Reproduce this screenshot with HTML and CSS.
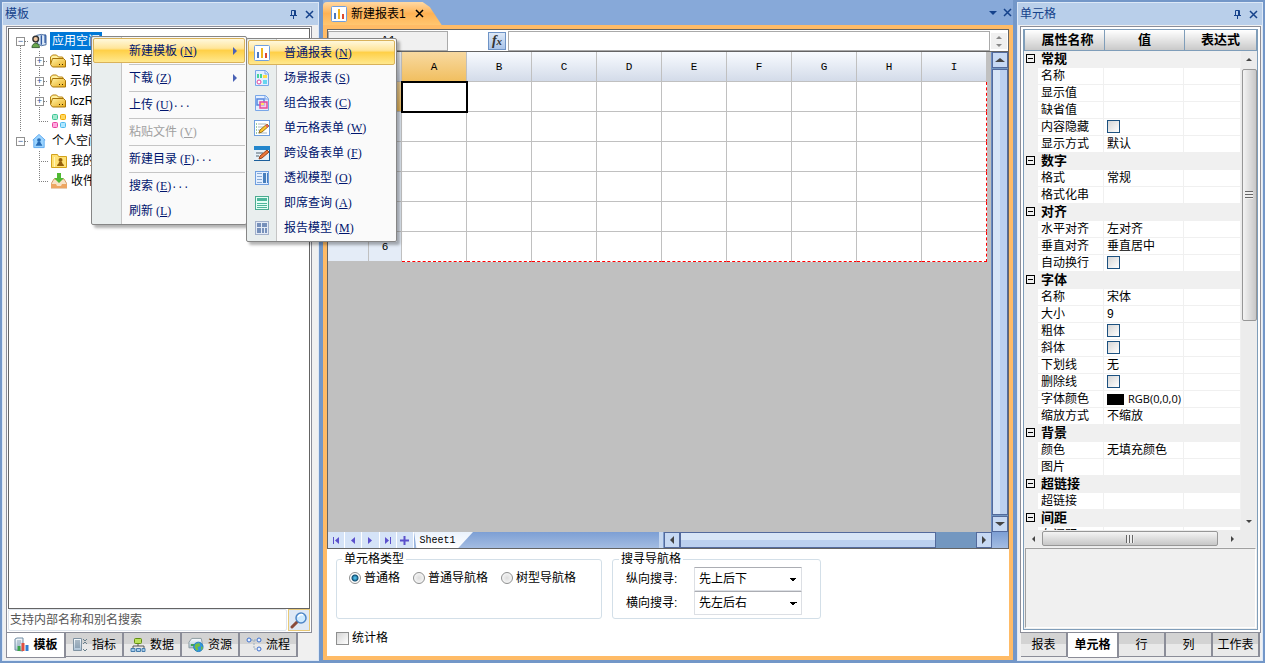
FILE: index.html
```html
<!DOCTYPE html>
<html lang="zh-CN">

<head>
    <meta charset="UTF-8">
    <meta name="viewport" content="width=device-width, initial-scale=1.0">
    <title>新建报表1</title>
    <link rel="stylesheet" href="styles.css">
</head>

<body>

    <!-- Shared icons -->
    <svg class="defs" width="0" height="0">
        <defs>
            <linearGradient id="gold" x1="0" y1="0" x2="1" y2="1">
                <stop offset="0" stop-color="#fff3a8" />
                <stop offset="1" stop-color="#e9ad1d" />
            </linearGradient>
            <linearGradient id="cabinet" x1="0" y1="0" x2="0" y2="1">
                <stop offset="0" stop-color="#fafdff" />
                <stop offset="1" stop-color="#a9c0d4" />
            </linearGradient>
        </defs>
        <symbol id="i-folder" viewBox="0 0 16 16">
            <path d="M.5 11V4l2-2h4l2 2h4l1 2v1" fill="#fff0a0" stroke="#b8810b" />
            <path d="M2.500 5.500h11l2 2V14h-13l-2-2.500z" fill="url(#gold)" stroke="#a87408" />
            <path d="M9 11.500h1M12 11.500h1" stroke="#3b2a00" />
        </symbol>
        <symbol id="i-chart" viewBox="0 0 16 16">
            <rect x=".5" y=".5" width="15" height="15" rx="1" fill="#fff" stroke="#6f9fe0" />
            <path d="M4 7v6" stroke="#4c78bd" stroke-width="2" />
            <path d="M8 3v10" stroke="#f0b41c" stroke-width="2" />
            <path d="M12 8v5" stroke="#dd4b2f" stroke-width="2" />
        </symbol>
        <symbol id="i-pin" viewBox="0 0 9 9">
            <path d="M2.500 5V.5h4V5M5.500 1v4M1 5.500h7M4.500 6v3" fill="none" stroke="#15428b" />
        </symbol>
        <symbol id="i-close" viewBox="0 0 9 9">
            <path d="M1 1l7 7M8 1L1 8" stroke="currentColor" stroke-width="1.500" />
        </symbol>
    </svg>

    <aside class="panel panel-left">
        <div class="panel-title">
            <h2>模板</h2>
            <button aria-label="固定"><svg width="9" height="9"><use href="#i-pin" /></svg></button>
            <button aria-label="关闭"><svg width="9" height="9"><use href="#i-close" /></svg></button>
        </div>
        <div class="panel-body">
            <div class="tree-box">
                <ul class="tree">
                    <li>
                        <div class="node"><button class="toggle" aria-label="折叠">−</button>
                            <svg width="16" height="16" viewBox="0 0 17 16">
                                <path d="M6 2l5-1 5 1v10l-5 1-4-2z" fill="#dceaf8" stroke="#42689c" />
                                <path d="M11 2v10M15 1v9" stroke="#315ba4" stroke-width="1.500" />
                                <circle cx="5" cy="6" r="3" fill="#f1c7a0" stroke="#333" stroke-width="1.500" />
                                <path d="M1 15c0-6 8-6 8 0z" fill="#6aa84e" stroke="#395f34" />
                            </svg>
                            <span class="selected">应用空间</span></div>
                        <ul>
                            <li class="node"><button class="toggle" aria-label="展开">+</button><svg width="16" height="16"><use href="#i-folder" /></svg><span>订单</span></li>
                            <li class="node"><button class="toggle" aria-label="展开">+</button><svg width="16" height="16"><use href="#i-folder" /></svg><span>示例</span></li>
                            <li class="node"><button class="toggle" aria-label="展开">+</button><svg width="16" height="16"><use href="#i-folder" /></svg><span>lczR</span></li>
                            <li class="node leaf">
                                <svg width="16" height="16" viewBox="0 0 16 16">
                                    <rect x="1.500" y="1.500" width="5" height="5" rx="1" fill="#a5e8cf" stroke="#3fc796" />
                                    <rect x="9.500" y="1.500" width="5" height="5" rx="1" fill="#ffd75d" stroke="#f0a800" />
                                    <rect x="1.500" y="9.500" width="5" height="5" rx="1" fill="#ffa7df" stroke="#e8439f" />
                                    <rect x="9.500" y="9.500" width="5" height="5" rx="1" fill="#b0e7ff" stroke="#4eb9ed" />
                                </svg><span>新建</span></li>
                        </ul>
                    </li>
                    <li>
                        <div class="node"><button class="toggle" aria-label="折叠">−</button>
                            <svg width="16" height="16" viewBox="0 0 17 16">
                                <path d="M8.500 1L15 7h-1v8H3V7H2z" fill="#9bd4ff" stroke="#5faaf0" />
                                <circle cx="8.500" cy="7" r="2" fill="#276bb5" />
                                <path d="M5 13c0-2 2-2 2-4h3c0 2 2 2 2 4z" fill="#276bb5" />
                            </svg>
                            <span>个人空间</span></div>
                        <ul>
                            <li class="node leaf">
                                <svg width="16" height="16" viewBox="0 0 16 16">
                                    <path d="M.5 14.500v-13h6l1 2h8v11z" fill="#ffe174" stroke="#d3a21c" />
                                    <path d="M3.500 4v10" stroke="#fff5b8" />
                                    <circle cx="9.500" cy="7" r="2" fill="#95600b" />
                                    <path d="M6 13c0-2 2-2 2-4h3c0 2 2 2 2 4z" fill="#95600b" />
                                </svg><span>我的</span></li>
                            <li class="node leaf">
                                <svg width="16" height="16" viewBox="0 0 16 16">
                                    <path d="M3 6h10l3 5v4H0v-4z" fill="#f8e2c5" stroke="#d5a06a" />
                                    <path d="M0 11h5l1 2h4l1-2h5v4H0z" fill="#eda662" />
                                    <path d="M6 0h4v5h3l-5 5-5-5h3z" fill="#50b933" />
                                </svg><span>收件箱</span></li>
                        </ul>
                    </li>
                </ul>
            </div>
            <div class="search">
                <input type="text" aria-label="搜索" placeholder="支持内部名称和别名搜索">
                <button aria-label="搜索">
                    <svg width="18" height="18" viewBox="0 0 18 18">
                        <path d="M8 10l-6 6" stroke="#8a4b3a" stroke-width="3" stroke-linecap="round" />
                        <circle cx="11" cy="7" r="5" fill="#cdeaff" stroke="#4d86c6" stroke-width="1.500" />
                        <path d="M8 6c1-2 3-3 5-2" fill="none" stroke="#fff" stroke-width="1.500" />
                    </svg>
                </button>
            </div>
        </div>
        <nav class="tabs tabs-left">
            <button class="active">
                <svg width="16" height="16" viewBox="0 0 16 16"><path d="M2 13V2l2-1h6v13z" fill="url(#cabinet)" stroke="#718da4" /><path d="M4 4h4M4 6h4M4 8h3" stroke="#8aa4b6" /><path d="M6 9v5" stroke="#39a249" stroke-width="3" /><path d="M10 6v8" stroke="#e14f40" stroke-width="3" /><path d="M14 8v6" stroke="#337fd1" stroke-width="3" /></svg>模板</button>
            <button>
                <svg width="16" height="16" viewBox="0 0 16 16"><path d="M1.500 13.500v-12h8v12z" fill="url(#cabinet)" stroke="#8093a2" /><path d="M3 4h5M3 6h5M3 8h5M3 10h5" stroke="#657d90" /><path d="M11 2l2 2 2-2M11 7l2-2 2 2M11 12l2 2 2-2" fill="none" stroke="#687f8c" /></svg>指标</button>
            <button>
                <svg width="16" height="16" viewBox="0 0 16 16"><path d="M8 7v2M3 11V9h11v2" fill="none" stroke="#555" /><rect x="4.500" y="1.500" width="7" height="5" rx="1" fill="#b9e15c" stroke="#638d12" /><path d="M1 11.500h4v3H1zM6.500 11.500h4v3h-4zM12 11.500h3v3h-3z" fill="#a3cbec" stroke="#477dac" /></svg>数据</button>
            <button>
                <svg width="16" height="16" viewBox="0 0 17 16"><path d="M1 5l3-4h10l1 4v6H1z" fill="url(#cabinet)" stroke="#8a999e" /><path d="M3 8h4" stroke="#37a44a" stroke-width="2" /><circle cx="11" cy="10" r="5" fill="#3197df" stroke="#247ebd" /><path d="M8 7l4-1 1 3-3 1 1 3-2 1-2-4zM14 9l2 2-2 3z" fill="#75bf41" /></svg>资源</button>
            <button>
                <svg width="16" height="16" viewBox="0 0 16 16"><path d="M5 3h6M8 3v9h3" fill="none" stroke="#9dafbf" stroke-dasharray="2 1" /><circle cx="3" cy="3" r="2" fill="#eaf2ff" stroke="#3e70cc" /><circle cx="13" cy="3" r="2" fill="#eaf2ff" stroke="#3e70cc" /><circle cx="13" cy="12" r="2" fill="#eaf2ff" stroke="#3e70cc" /></svg>流程</button>
        </nav>
    </aside>

    <main class="editor">
        <div class="doc-tabs">
            <div class="doc-tab">
                <svg width="16" height="16"><use href="#i-chart" /></svg>
                <span>新建报表1</span>
                <button aria-label="关闭"><svg width="9" height="9"><use href="#i-close" /></svg></button>
            </div>
            <button class="doc-list" aria-label="文档列表"><svg width="8" height="4" viewBox="0 0 8 4"><path d="M0 0h8L4 4z" fill="#15428b" /></svg></button>
            <button aria-label="关闭"><svg width="9" height="9"><use href="#i-close" /></svg></button>
        </div>
        <div class="doc">
            <div class="sheet">
                <div class="formula-bar">
                    <input class="cell-name" aria-label="单元格" value="A1" readonly>
                    <button class="fx" aria-label="函数"><i>f<small>x</small></i></button>
                    <input class="formula" type="text" aria-label="公式">
                    <div class="spinner"><span class="up"></span><span class="down"></span></div>
                </div>
                <div class="grid-area">
                    <div class="viewport">
                        <table class="grid">
                            <thead>
                                <tr><th class="corner"></th><th class="num"></th><th class="current">A</th><th>B</th><th>C</th><th>D</th><th>E</th><th>F</th><th>G</th><th>H</th><th>I</th></tr>
                            </thead>
                            <tbody>
                                <tr><th></th><th class="current">1</th><td class="cursor"></td><td></td><td></td><td></td><td></td><td></td><td></td><td></td><td></td></tr>
                                <tr><th></th><th>2</th><td></td><td></td><td></td><td></td><td></td><td></td><td></td><td></td><td></td></tr>
                                <tr><th></th><th>3</th><td></td><td></td><td></td><td></td><td></td><td></td><td></td><td></td><td></td></tr>
                                <tr><th></th><th>4</th><td></td><td></td><td></td><td></td><td></td><td></td><td></td><td></td><td></td></tr>
                                <tr><th></th><th>5</th><td></td><td></td><td></td><td></td><td></td><td></td><td></td><td></td><td></td></tr>
                                <tr><th></th><th>6</th><td></td><td></td><td></td><td></td><td></td><td></td><td></td><td></td><td></td></tr>
                            </tbody>
                        </table>
                    </div>
                    <div class="vscroll">
                        <button aria-label="向上"><span class="up"></span></button>
                        <div class="thumb"></div>
                        <button aria-label="向下"><span class="down"></span></button>
                    </div>
                </div>
                <div class="sheet-bar">
                    <div class="sheet-nav">
                        <button aria-label="首页"><svg width="9" height="9" viewBox="0 0 9 9"><path d="M1 1h1v7H1zM7 1v7L3 4.500z" /></svg></button>
                        <button aria-label="上一页"><svg width="9" height="9" viewBox="0 0 9 9"><path d="M6 1v7L2 4.500z" /></svg></button>
                        <button aria-label="下一页"><svg width="9" height="9" viewBox="0 0 9 9"><path d="M2 1v7l4-3.500z" /></svg></button>
                        <button aria-label="末页"><svg width="9" height="9" viewBox="0 0 9 9"><path d="M7 1h1v7H7zM2 1v7l4-3.500z" /></svg></button>
                        <button aria-label="新增"><svg width="9" height="9" viewBox="0 0 9 9"><path d="M3.500 0h2v3.500H9v2H5.500V9h-2V5.500H0v-2h3.500z" /></svg></button>
                    </div>
                    <button class="sheet-tab">Sheet1</button>
                    <div class="hscroll">
                        <button aria-label="向左"><span class="left"></span></button>
                        <div class="thumb"></div>
                        <div class="track"></div>
                        <button aria-label="向右"><span class="right"></span></button>
                    </div>
                </div>
            </div>
            <form class="options">
                <div class="groups">
                    <fieldset class="cell-type">
                        <legend>单元格类型</legend>
                        <label><input type="radio" name="type" checked>普通格</label>
                        <label><input type="radio" name="type">普通导航格</label>
                        <label><input type="radio" name="type">树型导航格</label>
                    </fieldset>
                    <fieldset class="nav-type">
                        <legend>搜寻导航格</legend>
                        <label for="v-search">纵向搜寻:</label>
                        <select id="v-search"><option>先上后下</option><option>先下后上</option></select>
                        <label for="h-search">横向搜寻:</label>
                        <select id="h-search"><option>先左后右</option><option>先右后左</option></select>
                    </fieldset>
                </div>
                <label class="stat"><input type="checkbox">统计格</label>
            </form>
        </div>
    </main>

    <aside class="panel panel-right">
        <div class="panel-title">
            <h2>单元格</h2>
            <button aria-label="固定"><svg width="9" height="9"><use href="#i-pin" /></svg></button>
            <button aria-label="关闭"><svg width="9" height="9"><use href="#i-close" /></svg></button>
        </div>
        <div class="panel-body">
            <div class="props-box">
                <table class="props-head">
                    <thead>
                        <tr><th class="name">属性名称</th><th class="value">值</th><th>表达式</th></tr>
                    </thead>
                </table>
                <div class="props-view">
                    <div class="props-scroll">
                        <table class="props">
                            <colgroup><col class="c-toggle"><col class="c-name"><col class="c-value"><col></colgroup>
                            <tbody>
                                <tr class="group"><th><button aria-label="折叠"></button></th><th colspan="3">常规</th></tr>
                                <tr><th></th><td>名称</td><td></td><td></td></tr>
                                <tr><th></th><td>显示值</td><td></td><td></td></tr>
                                <tr><th></th><td>缺省值</td><td></td><td></td></tr>
                                <tr><th></th><td><label for="p-hide">内容隐藏</label></td><td><input type="checkbox" id="p-hide"></td><td></td></tr>
                                <tr><th></th><td>显示方式</td><td>默认</td><td></td></tr>
                                <tr class="group"><th><button aria-label="折叠"></button></th><th colspan="3">数字</th></tr>
                                <tr><th></th><td>格式</td><td>常规</td><td></td></tr>
                                <tr><th></th><td>格式化串</td><td></td><td></td></tr>
                                <tr class="group"><th><button aria-label="折叠"></button></th><th colspan="3">对齐</th></tr>
                                <tr><th></th><td>水平对齐</td><td>左对齐</td><td></td></tr>
                                <tr><th></th><td>垂直对齐</td><td>垂直居中</td><td></td></tr>
                                <tr><th></th><td><label for="p-wrap">自动换行</label></td><td><input type="checkbox" id="p-wrap"></td><td></td></tr>
                                <tr class="group"><th><button aria-label="折叠"></button></th><th colspan="3">字体</th></tr>
                                <tr><th></th><td>名称</td><td>宋体</td><td></td></tr>
                                <tr><th></th><td>大小</td><td>9</td><td></td></tr>
                                <tr><th></th><td><label for="p-bold">粗体</label></td><td><input type="checkbox" id="p-bold"></td><td></td></tr>
                                <tr><th></th><td><label for="p-italic">斜体</label></td><td><input type="checkbox" id="p-italic"></td><td></td></tr>
                                <tr><th></th><td>下划线</td><td>无</td><td></td></tr>
                                <tr><th></th><td><label for="p-strike">删除线</label></td><td><input type="checkbox" id="p-strike"></td><td></td></tr>
                                <tr><th></th><td>字体颜色</td><td class="rgb"><span class="swatch"></span>RGB(0,0,0)</td><td></td></tr>
                                <tr><th></th><td>缩放方式</td><td>不缩放</td><td></td></tr>
                                <tr class="group"><th><button aria-label="折叠"></button></th><th colspan="3">背景</th></tr>
                                <tr><th></th><td>颜色</td><td>无填充颜色</td><td></td></tr>
                                <tr><th></th><td>图片</td><td></td><td></td></tr>
                                <tr class="group"><th><button aria-label="折叠"></button></th><th colspan="3">超链接</th></tr>
                                <tr><th></th><td>超链接</td><td></td><td></td></tr>
                                <tr class="group"><th><button aria-label="折叠"></button></th><th colspan="3">间距</th></tr>
                                <tr><th></th><td>左间距</td><td>1</td><td></td></tr>
                            </tbody>
                        </table>
                    </div>
                    <div class="bar bar-v">
                        <button aria-label="向上"><span class="up"></span></button>
                        <div class="thumb"></div>
                        <div class="track"></div>
                        <button aria-label="向下"><span class="down"></span></button>
                    </div>
                </div>
                <div class="bar bar-h">
                    <button aria-label="向左"><span class="left"></span></button>
                    <div class="thumb"></div>
                    <button aria-label="向右"><span class="right"></span></button>
                </div>
                <div class="description"></div>
            </div>
        </div>
        <nav class="tabs tabs-right">
            <button>报表</button>
            <button class="active">单元格</button>
            <button>行</button>
            <button>列</button>
            <button>工作表</button>
        </nav>
    </aside>

    <!-- Context menu of the tree -->
    <ul class="menu context-menu">
        <li class="hot">
            <button>新建模板<span class="key">(<u>N</u>)</span><span class="arrow"></span></button>
            <ul class="menu submenu">
                <li class="hot"><button><svg width="16" height="16"><use href="#i-chart" /></svg>普通报表<span class="key">(<u>N</u>)</span></button></li>
                <li><button>
                    <svg width="16" height="16" viewBox="0 0 16 16"><path d="M1.500.5h10l3 3v12h-13z" fill="#e3efff" stroke="#78a7e8" /><path d="M11 1v3h3" fill="none" stroke="#78a7e8" /><path d="M3 4h2v4H3zM6 4h2v4H6z" fill="#45d49a" /><path d="M9 5h4v3H9z" fill="#ffdd45" /><path d="M9 10h4v4H9z" fill="#66d6ef" /><circle cx="5" cy="12" r="2" fill="#fff" stroke="#e34499" /></svg>场景报表<span class="key">(<u>S</u>)</span></button></li>
                <li><button>
                    <svg width="16" height="16" viewBox="0 0 16 16"><path d="M1.500.5h10l3 3v12h-13z" fill="#e3efff" stroke="#78a7e8" /><path d="M11 1v3h3" fill="none" stroke="#78a7e8" /><rect x="3" y="4" width="7" height="6" fill="none" stroke="#5487df" stroke-width="1.500" /><rect x="6" y="7" width="7" height="6" fill="#ffb7dc" fill-opacity=".6" stroke="#e84b99" stroke-width="1.500" /><path d="M7 8h3v2H7z" fill="#ffe165" /></svg>组合报表<span class="key">(<u>C</u>)</span></button></li>
                <li><button>
                    <svg width="16" height="16" viewBox="0 0 16 16"><rect x=".5" y=".5" width="15" height="15" fill="#fff" stroke="#6f9fe0" /><path d="M2 4h1M2 7h1M2 10h1M2 13h1" stroke="#3c9f45" /><path d="M4 4h8M4 7h7M4 10h4M4 13h9" stroke="#a9b8bd" /><path d="M5 13l1-3 7-6 2 2-7 6z" fill="#ffc52b" stroke="#9c741c" /><path d="M12 5l2 2" stroke="#e15b6c" stroke-width="2" /></svg>单元格表单<span class="key">(<u>W</u>)</span></button></li>
                <li><button>
                    <svg width="16" height="16" viewBox="0 0 16 16"><path d="M0 1h16v14H0z" fill="#e7f0f7" /><path d="M0 1h16v4H0z" fill="#2286cc" /><path d="M0 15.500h16M15.500 5v10" stroke="#1b5f9b" /><path d="M2 8h7M2 11h3" stroke="#9ba9b3" stroke-width="2" /><path d="M5 14l1-3 7-6 2 2-7 6z" fill="#ef7736" stroke="#934320" /></svg>跨设备表单<span class="key">(<u>F</u>)</span></button></li>
                <li><button>
                    <svg width="16" height="16" viewBox="0 0 16 16"><rect x="1.500" y="1.500" width="13" height="13" fill="#e3efff" stroke="#6f9fe0" /><path d="M3 3.500h5M3 6.500h5M3 9.500h5M3 12.500h5" stroke="#86a9d4" /><path d="M9 3h3v10H9zM13 3h1v10h-1z" fill="#477fbd" /></svg>透视模型<span class="key">(<u>O</u>)</span></button></li>
                <li><button>
                    <svg width="16" height="16" viewBox="0 0 16 16"><rect x="1.500" y="1.500" width="13" height="13" fill="#e4fff5" stroke="#4cab91" /><path d="M3 3h10v3H3z" fill="#4cb79b" /><path d="M3 8.500h10M3 10.500h10M3 12.500h10" stroke="#4cb79b" /></svg>即席查询<span class="key">(<u>A</u>)</span></button></li>
                <li><button>
                    <svg width="16" height="16" viewBox="0 0 16 16"><rect x="1.500" y="1.500" width="13" height="13" fill="#e3eaf5" stroke="#a2b0ca" /><path d="M3 3h4v4H3zM3 8h4v5H3zM8 3h5v4H8zM8 8h2v5H8zM11 8h2v5h-2z" fill="#7690ba" /></svg>报告模型<span class="key">(<u>M</u>)</span></button></li>
            </ul>
        </li>
        <li class="sep"></li>
        <li><button>下载<span class="key">(<u>Z</u>)</span><span class="arrow"></span></button></li>
        <li class="sep"></li>
        <li><button>上传<span class="key">(<u>U</u>)</span><span class="dots">...</span></button></li>
        <li class="sep"></li>
        <li><button disabled>粘贴文件<span class="key">(<u>V</u>)</span></button></li>
        <li class="sep"></li>
        <li><button>新建目录<span class="key">(<u>F</u>)</span><span class="dots">...</span></button></li>
        <li class="sep"></li>
        <li><button>搜索<span class="key">(<u>E</u>)</span><span class="dots">...</span></button></li>
        <li><button>刷新<span class="key">(<u>L</u>)</span></button></li>
    </ul>

</body>

</html>
```
FILE: styles.css
```css
* {
    box-sizing: border-box;
}

body {
    display: flex;
    gap: 4px;
    height: 100vh;
    margin: 0;
    padding: 0 2px;
    overflow: hidden;
    position: relative;
    background-color: #7397c8;
    color: #000;
    font-family: "Liberation Sans", "Noto Sans CJK SC", sans-serif;
    font-size: 12px;
    line-height: 16px;
}

button, input, select {
    font: inherit;
    color: inherit;
    margin: 0;
    padding: 0;
    border: 0;
    background: none;
}

ul {
    list-style: none;
    margin: 0;
    padding: 0;
}

table {
    border-collapse: collapse;
    table-layout: fixed;
}

.defs {
    position: absolute;
}

/* arrows */
.up, .down, .left, .right, .arrow {
    width: 0;
    height: 0;
    border: 4px solid transparent;
}

.up {
    border-top: 0;
    border-bottom-color: #444;
}

.down {
    border-bottom: 0;
    border-top-color: #444;
}

.left {
    border-left: 0;
    border-right-color: #444;
}

.right {
    border-right: 0;
    border-left-color: #444;
}

/* side panels */
.panel {
    display: flex;
    flex-direction: column;
    flex-shrink: 0;
    margin: 2px 0;
    border: 1px solid #dce8f7;
    background-color: #f0f0f0;
}

.panel-left {
    width: 317px;
}

.panel-right {
    width: 246px;
}

.panel-title {
    display: flex;
    align-items: center;
    gap: 7px;
    height: 22px;
    padding: 0 4px 0 2px;
    background-color: #b9cfea;
    color: #15428b;
}

.panel-title h2 {
    flex: 1;
    margin: 0;
    font-size: 12px;
    font-weight: normal;
}

.panel-title button, .doc-tabs button {
    display: flex;
    color: #15428b;
}

.panel-body {
    flex: 1;
    display: flex;
    flex-direction: column;
    min-height: 0;
    margin: 1px 6px 0 3px;
    padding: 1px;
    border: 1px solid #8b8d98;
    background-color: #fff;
}

.panel-right .panel-body {
    margin: 1px 1px 0 2px;
}

.tree-box {
    flex: 1;
    border: 1px solid #646464;
    padding: 2px 7px;
}

.node {
    display: flex;
    align-items: center;
    gap: 3px;
    height: 20px;
    white-space: nowrap;
}

.node .toggle {
    display: flex;
    align-items: center;
    justify-content: center;
    width: 9px;
    height: 9px;
    margin-right: 3px;
    border: 1px solid #919191;
    background-color: #fff;
    color: #2f4f8f;
    font-size: 9px;
    line-height: 7px;
}

.tree > li {
    background: repeating-linear-gradient(#808080 0 1px, transparent 1px 2px) 4px 15px / 1px 100% no-repeat;
}

.tree > li:last-child {
    background: none;
}

.tree .node::before {
    content: "";
    order: 1;
    width: 4px;
    margin-left: -7px;
    border-top: 1px dotted #808080;
}

.tree .node svg {
    order: 2;
}

.tree .node span {
    order: 3;
    padding: 1px 2px;
}

.tree ul {
    margin-left: 19px;
    background: repeating-linear-gradient(#808080 0 1px, transparent 1px 2px) 4px 0 / 1px calc(100% - 10px) no-repeat;
}

.tree ul .node span {
    padding: 1px;
}

.node.leaf {
    padding-left: 12px;
}

.tree .node.leaf::before {
    width: 9px;
    margin-left: -8px;
}

.tree .node .selected {
    background-color: #0078d7;
    color: #fff;
}

.search {
    display: flex;
    gap: 1px;
    height: 22px;
}

.search input {
    flex: 1;
    min-width: 0;
    padding: 0 1px;
    border: 1px solid #dfe5ec;
    border-radius: 2px;
}

.search input::placeholder {
    color: #555;
    opacity: 1;
}

.search button {
    width: 22px;
    border: 1px solid #e8c977;
    background-color: #dfe9f5;
}

.search svg {
    display: block;
    margin: auto;
}

/* bottom tabs of the side panels */
.tabs {
    display: flex;
    align-items: flex-start;
    height: 27px;
    margin: 0 2px 0 3px;
}

.tabs button {
    display: flex;
    align-items: center;
    justify-content: center;
    gap: 4px;
    height: 24px;
    border: 2px solid #8b8d98;
    border-width: 0 2px 1px 0;
    background: linear-gradient(#d3d3d3 50%, #e9e9e9 50%);
    white-space: nowrap;
}

.tabs .active {
    height: 25px;
    background: #fff;
    font-weight: bold;
}

.tabs-left button {
    width: 58px;
}

.tabs-left .active {
    width: 60px;
    border-left-width: 1px;
}

.tabs-right button {
    flex: 1 1 48px;
}

.tabs-right .active {
    flex-basis: 52px;
}

/* editor */
.editor {
    flex: 1;
    display: flex;
    flex-direction: column;
    min-width: 0;
    padding-bottom: 3px;
}

.doc-tabs {
    display: flex;
    align-items: center;
    gap: 6px;
    height: 25px;
    padding-right: 1px;
    background-color: #87a9d9;
}

.doc-tab {
    display: flex;
    align-items: center;
    gap: 4px;
    height: 23px;
    margin-top: 2px;
    padding: 0 18px 0 8px;
    border-radius: 4px 0 0 0;
    background: linear-gradient(#ffd9a4, #ffb254 50%, #ffc670);
    clip-path: polygon(0 0, 84% 0, 90% 22%, 100% 100%, 0 100%);
}

.doc-tab button {
    margin-left: 5px;
    color: #000;
}

.doc-list {
    margin-left: auto;
}

.doc {
    flex: 1;
    display: flex;
    flex-direction: column;
    min-height: 0;
    padding: 4px;
    background-color: #ffbb66;
}

.sheet {
    flex: 1;
    display: flex;
    flex-direction: column;
    min-height: 0;
    border: 1px solid #646464;
    background-color: #fff;
}

.formula-bar {
    display: flex;
    height: 22px;
    padding-top: 1px;
    border-bottom: 1px solid #646464;
}

.cell-name {
    width: 120px;
    border: 1px solid #aaa;
    background-color: #f0f0f0;
    text-align: center;
}

.fx {
    width: 18px;
    height: 18px;
    margin: 1px 2px 0 40px;
    border: 1px solid #6e93c6;
    background: linear-gradient(#dce8f7, #a9c3e8);
    color: #333;
    font: bold 14px/14px "Liberation Serif", serif;
}

.fx small {
    font-size: 11px;
}

.formula {
    flex: 1;
    min-width: 0;
    border: 1px solid #aaa;
}

.spinner {
    display: flex;
    flex-direction: column;
    align-items: center;
    justify-content: space-around;
    width: 16px;
    margin: 2px 1px;
    background-color: #f0f0f0;
}

.spinner span {
    border-width: 3px;
}

.spinner .up {
    border-top: 0;
    border-bottom-color: #888;
}

.spinner .down {
    border-bottom: 0;
    border-top-color: #888;
}

.grid-area {
    flex: 1;
    display: flex;
    min-height: 0;
}

.viewport {
    flex: 1;
    min-width: 0;
    overflow: hidden;
    background-color: #c0c0c0;
}

.grid {
    width: 659px;
    border-collapse: separate;
    border-spacing: 0;
}

.grid th, .grid td {
    height: 30px;
    padding: 0;
    border: 1px solid #c0c0c0;
    border-width: 0 1px 1px 0;
    background-color: #fff;
}

.grid th {
    background-color: #e4ecf7;
    font: 11px "Liberation Mono", monospace;
}

.grid thead th {
    background: linear-gradient(#f8fbff, #d3dbe9);
}

.grid thead .corner {
    width: 41px;
}

.grid thead .num {
    width: 33px;
}

.grid .current, .grid thead .current {
    background: linear-gradient(#f8d9a0, #f1bf60);
}

.grid td:last-child {
    border-right: 1px dashed #f00;
}

.grid tr:last-child td {
    border-bottom: 1px dashed #f00;
}

.grid .cursor {
    outline: 2px solid #000;
    outline-offset: -1px;
}

/* blue scrollbars of the sheet */
.vscroll {
    display: flex;
    flex-direction: column;
    align-items: center;
    gap: 1px;
    width: 17px;
    border-left: 1px solid #6a8cc0;
    background-color: #7397c0;
}

.vscroll button, .hscroll button {
    display: flex;
    align-items: center;
    justify-content: center;
    flex-shrink: 0;
    width: 16px;
    height: 16px;
    border: 1px solid #536a9c;
    background-color: #c7d9f3;
}

.vscroll .up, .vscroll .down {
    border-left-width: 5px;
    border-right-width: 5px;
}

.vscroll .thumb {
    flex: 1;
    width: 16px;
    border: 1px solid #536a9c;
    background: linear-gradient(90deg, #d7e5f7 50%, #bbd0ef 50%);
}

.sheet-bar {
    display: flex;
    height: 16px;
    background: linear-gradient(#7d9fd4, #a3bce2);
}

.sheet-nav {
    display: flex;
    width: 86px;
    background-color: #d5e3f7;
}

.sheet-nav button {
    flex: 1;
    display: flex;
    align-items: center;
    justify-content: center;
    border-right: 1px solid #fff;
}

.sheet-nav svg {
    fill: #5b50cc;
}

.sheet-tab {
    width: 59px;
    padding-right: 12px;
    background: linear-gradient(#eaf2fc, #fff);
    clip-path: polygon(0 0, 100% 0, 75% 100%, 4% 100%);
    font: 10px "Liberation Mono", monospace;
}

.hscroll {
    display: flex;
    width: 349px;
    margin-left: auto;
    padding-right: 16px;
}

.hscroll::before {
    content: "";
    width: 4px;
    margin-right: auto;
    background-color: #c5d7f0;
    border-right: 1px solid #7f9ccc;
}

.hscroll .thumb {
    flex: 0 1 265px;
    border: 1px solid #536a9c;
    background: linear-gradient(#d7e5f7 50%, #bbd0ef 50%);
}

.hscroll .track {
    flex: 0 0 40px;
    background-color: #7397c0;
}

/* cell options */
.options {
    height: 107px;
    padding: 2px 9px;
    background-color: #fff;
}

.groups {
    display: flex;
    gap: 10px;
    height: 68px;
}

fieldset {
    display: flex;
    align-items: flex-start;
    margin: 0;
    padding: 3px 12px;
    border: 1px solid #d3dfe8;
    border-radius: 3px;
}

legend {
    margin-left: -7px;
    padding: 0 2px;
}

.cell-type {
    gap: 13px;
    width: 266px;
}

.options label {
    display: flex;
    align-items: center;
    gap: 3px;
    white-space: nowrap;
}

.options .stat {
    margin-top: 11px;
}

input[type="radio"] {
    appearance: none;
    width: 12px;
    height: 12px;
    border: 1px solid #8e8f8f;
    border-radius: 50%;
    background: radial-gradient(#ddd, #fff);
}

input[type="radio"]:checked {
    background: radial-gradient(circle, #49b5e2 0 1px, #104d70 3px, #fff 4px);
}

input[type="checkbox"] {
    appearance: none;
    width: 13px;
    height: 13px;
    border: 1px solid #8e8f8f;
    background: linear-gradient(135deg, #d5d5d5, #fff);
}

.nav-type {
    display: grid;
    grid-template-columns: 68px 108px;
    align-content: start;
    align-items: center;
    width: 209px;
    padding: 0 13px;
}

.nav-type select {
    appearance: none;
    height: 24px;
    padding: 0 4px;
    border: 1px solid #dcdfe4;
    border-top-color: #abadb3;
    border-radius: 1px;
    background-color: #fff;
    background-image: linear-gradient(-135deg, #000 50%, transparent 50%), linear-gradient(135deg, #000 50%, transparent 50%);
    background-position: right 8px top 10px, right 4px top 10px;
    background-size: 4px 4px;
    background-repeat: no-repeat;
}

/* properties */
.props-box {
    flex: 1;
    display: flex;
    flex-direction: column;
    min-height: 0;
    margin: 1px;
    border: 1px solid #7f9db9;
    background-color: #f0f0f0;
}

.props-head {
    width: 100%;
}

.props-head th {
    height: 20px;
    padding: 0;
    border: 1px solid #7f9db9;
    border-width: 0 1px 1px;
    background: linear-gradient(#fff, #c9c9c9);
    font-size: 13px;
    line-height: 18px;
}

.props-head .name {
    width: 80px;
    padding-left: 6px;
}

.props-head .value {
    width: 80px;
}

.props-view {
    flex: 1;
    display: flex;
    min-height: 0;
}

.props-scroll {
    flex: 1;
    min-width: 0;
    overflow: hidden;
}

.props {
    width: 100%;
    border-collapse: separate;
    border-spacing: 0;
}

.c-toggle {
    width: 14px;
}

.c-name {
    width: 66px;
}

.c-value {
    width: 80px;
}

.props th, .props td {
    height: 17px;
    padding: 0 0 0 3px;
    border: 1px solid #f0f0f0;
    border-width: 0 1px 1px 0;
    background-color: #fff;
    line-height: 16px;
    text-align: left;
    white-space: nowrap;
}

.props th {
    background-color: #f0f0f0;
    font-size: 13px;
}

.props th:first-child {
    padding-left: 2px;
}

.props .group button {
    display: block;
    width: 9px;
    height: 9px;
    border: 1px solid #000;
    background: linear-gradient(#000, #000) center / 5px 1px no-repeat;
}

.props input {
    display: block;
    border-color: #1c5180;
}

.props .rgb {
    font-family: "Open Sans", sans-serif;
    font-size: 11px;
}

.swatch {
    display: inline-block;
    width: 17px;
    height: 11px;
    margin-right: 4px;
    background-color: #000;
    vertical-align: middle;
}

.bar {
    display: flex;
    align-items: center;
    background-color: #ececec;
}

.bar button {
    display: flex;
    align-items: center;
    justify-content: center;
    flex-shrink: 0;
    width: 18px;
    height: 18px;
}

.bar button span {
    border-width: 3px;
}

.bar .up {
    border-top: 0;
}

.bar .down {
    border-bottom: 0;
}

.bar .left {
    border-left: 0;
}

.bar .right {
    border-right: 0;
}

.bar .thumb {
    display: flex;
    align-items: center;
    justify-content: center;
    border: 1px solid #979797;
    border-radius: 2px;
    background: linear-gradient(90deg, #f4f4f4, #c7c7c7);
}

.bar-v {
    flex-direction: column;
    width: 16px;
}

.bar-v .thumb {
    flex: 253;
    width: 15px;
}

.bar-v .track {
    flex: 193;
}

.bar .thumb::before {
    content: "";
    width: 8px;
    height: 8px;
    background: repeating-linear-gradient(#666 0 1px, #eee 1px 3px);
}

.bar-h {
    height: 17px;
    padding-right: 16px;
}

.bar-h .thumb {
    width: 176px;
    height: 15px;
    margin-right: auto;
    background: linear-gradient(#f4f4f4, #c7c7c7);
}

.bar-h .thumb::before {
    background: repeating-linear-gradient(90deg, #666 0 1px, #eee 1px 3px);
}

.description {
    height: 80px;
    margin: 1px;
    border: 1px solid #a0a0a0;
    border-right-color: #fff;
    border-bottom-color: #fff;
}

/* menus */
.menu {
    position: absolute;
    padding: 1px;
    border: 1px solid #868686;
    border-radius: 2px;
    background: linear-gradient(90deg, #e9eeee 29px, #c5c5c5 29px 30px, #fafafa 30px);
    box-shadow: 3px 3px 3px rgba(0, 0, 0, 0.3);
    color: #00156e;
}

.menu button {
    display: flex;
    align-items: center;
    width: 100%;
    height: 25px;
    padding: 0 8px 0 36px;
    white-space: nowrap;
}

.menu button:disabled {
    color: #a0a0a0;
}

.menu .hot > button {
    border: 1px solid #d9b25a;
    border-radius: 2px;
    background: linear-gradient(#fff8dc, #ffe59a 40%, #ffd048 50%, #ffe88e);
}

.context-menu {
    left: 91px;
    top: 36px;
    width: 156px;
}

.context-menu > .hot > button {
    padding: 0 7px 0 35px;
}

.sep {
    height: 2px;
    margin-left: 36px;
    border-bottom: 1px solid #c5c5c5;
}

.submenu {
    left: 154px;
    top: 1px;
    width: 151px;
}

.menu .submenu button {
    padding-left: 6px;
}

.menu .submenu .hot > button {
    padding-left: 5px;
}

.submenu svg {
    margin-right: 14px;
}

.key {
    margin-left: 3px;
    font-family: "Liberation Serif", serif;
}

.dots {
    font: 10px "Liberation Mono", monospace;
}

.arrow {
    margin-left: auto;
    border-right: 0;
    border-left-color: #4a62b5;
}
```
